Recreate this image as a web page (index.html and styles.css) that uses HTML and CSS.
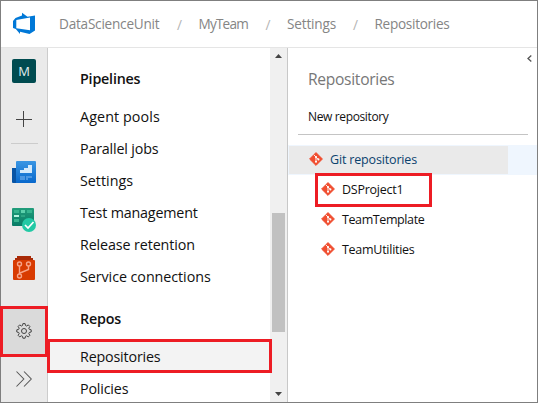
FILE: index.html
```html
<!DOCTYPE html>
<html lang="en">
<head>
<meta charset="utf-8">
<title>Repositories</title>
<link rel="stylesheet" href="styles.css">
</head>
<body>
<svg class="defs" width="0" height="0" aria-hidden="true">
  <symbol id="git" viewBox="0 0 14 14">
    <path d="M7 .6 13.4 7 7 13.4.6 7z" fill="#f04e30" stroke="#f04e30" stroke-width="1" stroke-linejoin="round"/>
    <path d="M4.800 2.800 7 5v5M7 5.200l2.400 2.300" fill="none" stroke="#fff" stroke-width=".9"/>
    <circle cx="7" cy="5" r="1.050" fill="#fff"/><circle cx="7" cy="9.700" r="1.050" fill="#fff"/><circle cx="9.400" cy="7.400" r="1.050" fill="#fff"/>
  </symbol>
</svg>
<div class="window">
  <header class="topbar">
    <svg class="logo" width="24" height="24" viewBox="0 0 24 24"><path fill="#0078d7" d="M1 9 3.500 6 10 3.500V.8l5.500 4L23 3.500v15L17.500 22 8 19.800V22L3.800 17 1 16zM4.300 8v8.300L18 18.300V5.600z"/></svg>
    <nav class="crumbs">
      <span class="crumb c-org">DataScienceUnit</span><span class="slash">/</span>
      <span class="crumb c-team">MyTeam</span><span class="slash">/</span>
      <span class="crumb c-set">Settings</span><span class="slash">/</span>
      <span class="crumb c-repo">Repositories</span>
    </nav>
  </header>
  <div class="body">
    <aside class="rail">
      <div class="avatar">M</div>
      <svg class="plus" width="16" height="16" viewBox="0 0 16 16"><path d="M0 8.500h16M7.500 0v16" stroke="#444" fill="none"/></svg>
      <div class="rail-line"></div>
      <svg class="boards" width="24" height="22" viewBox="0 0 24 22">
        <defs><linearGradient id="b" x2="0" y2="1"><stop stop-color="#3a96e3"/><stop offset="1" stop-color="#0868cc"/></linearGradient></defs>
        <path fill="#0754a5" d="M0 7h5v15H1q-1 0-1-1z"/><path fill="url(#b)" d="M4 1q0-1 1-1h18q1 0 1 1v20q0 1-1 1H4z"/>
        <path fill="#d5eafb" d="M8 12V9h4V7h4V4h4v8z"/><path fill="#4c97e2" d="M8 15h5v4H8zM14 15h6v2h-6zM14 17h2v2h-2z"/>
      </svg>
      <svg class="plans" width="24" height="24" viewBox="0 0 24 24">
        <defs><linearGradient id="p" x2="0" y2="1"><stop stop-color="#229d7b"/><stop offset="1" stop-color="#087c67"/></linearGradient></defs>
        <rect width="22" height="18" rx="1" fill="url(#p)"/>
        <path fill="#36b48f" d="M2 2h5v3H2zM15 2h5v3h-5zM2 11h5v3H2z"/><path fill="#5cd0ac" d="M9 2h4v3H9z"/><path fill="#b5f3df" d="M2 7h5v2H2z"/><path fill="#2ba583" d="M9 7h4v2H9z"/>
        <circle cx="17" cy="17" r="7" fill="#22c9a5"/><path d="m13 17 3 3 5.500-6" fill="none" stroke="#fff" stroke-width="1.700"/>
      </svg>
      <svg class="repos" width="22" height="24" viewBox="0 0 22 24">
        <path fill="#a92b08" d="M4 0h14v2h2v2H2V2h2z"/><rect y="4" width="22" height="20" rx="1" fill="#d83b01"/>
        <g fill="none" stroke="#f7a487" stroke-width="1.400"><circle cx="6.500" cy="8" r="2"/><circle cx="15.500" cy="8" r="2"/><circle cx="6.500" cy="20" r="2"/><path d="M6.500 10v8M15.500 10v3.500L7 17"/></g>
      </svg>
      <div class="gear-cell">
        <svg width="16" height="16" viewBox="0 0 16 16" fill="none" stroke="#444" stroke-width="1"><path d="M6.900.6h2.200l.4 1.900 1.100.5 1.700-1.100 1.600 1.600-1.100 1.700.5 1.100 1.900.5v2.200l-1.900.5-.5 1.100 1.100 1.700-1.600 1.600-1.700-1.100-1.100.5-.4 1.900H6.900l-.4-1.900-1.100-.5-1.700 1.100-1.600-1.600 1.100-1.700-.5-1.100L.8 9V6.800l1.900-.5.5-1.100-1.100-1.700 1.600-1.600L5.400 3l1.100-.5z"/><circle cx="8" cy="8" r="2.500"/></svg>
      </div>
      <svg class="more" width="16" height="16" viewBox="0 0 16 16"><path d="m.5.500 7.300 7.500-7.300 7.500M8 .5 15.300 8 8 15.500" stroke="#555" stroke-width="1.050" fill="none"/></svg>
    </aside>
    <nav class="menu">
      <h2 class="m-pipe">Pipelines</h2>
      <ul>
        <li class="m-agent">Agent pools</li><li class="m-jobs">Parallel jobs</li><li class="m-set">Settings</li>
        <li class="m-test">Test management</li><li class="m-rel">Release retention</li><li class="m-svc">Service connections</li>
      </ul>
      <h2 class="m-repos">Repos</h2>
      <ul><li class="m-repo current">Repositories</li><li class="m-pol">Policies</li></ul>
    </nav>
    <div class="scrollbar">
      <svg width="7" height="4" viewBox="0 0 7 4"><path d="M0 4h7L3.500 0z" fill="#444"/></svg>
      <div class="thumb"></div>
      <svg width="7" height="4" viewBox="0 0 7 4"><path d="M0 0h7L3.500 4z" fill="#444"/></svg>
    </div>
    <main class="panel">
      <svg class="collapse" width="5" height="7" viewBox="0 0 5 7"><path d="M4.300.500 1 3.500l3.300 3" fill="none" stroke="#555" stroke-width="1.300"/></svg>
      <h1>Repositories</h1>
      <div class="new">New repository</div>
      <ul class="tree">
        <li class="root"><div class="rootcell"><svg class="git"><use href="#git"/></svg><span class="t-git">Git repositories</span></div></li>
        <li><svg class="git"><use href="#git"/></svg><span class="t-ds">DSProject1</span></li>
        <li><svg class="git"><use href="#git"/></svg><span class="t-tpl">TeamTemplate</span></li>
        <li><svg class="git"><use href="#git"/></svg><span class="t-util">TeamUtilities</span></li>
      </ul>
    </main>
  </div>
  <div class="mark mark-gear"></div>
  <div class="mark mark-menu"></div>
  <div class="mark mark-project"></div>
</div>
</body>
</html>
```
FILE: styles.css
```css
* { box-sizing: border-box; }
body, h1, h2, ul { margin: 0; padding: 0; }
body { font-family: "Open Sans", "Noto Sans", sans-serif; color: #111; background: #fff; overflow: hidden; }
ul { list-style: none; }
svg { display: block; flex: none; }
.defs { position: absolute; }
.window { position: relative; width: 538px; height: 403px; border: 1px solid #7f7f7f; display: flex; flex-direction: column; white-space: nowrap; }
.topbar { height: 47px; flex: none; border-bottom: 1px solid #e5e5e5; display: flex; align-items: center; padding-left: 11px; }
.crumbs { display: flex; align-items: center; padding-left: 23px; font-size: 13.6px; color: #858585; }
.crumb { line-height: 20px; }
.c-org { width: 103px; letter-spacing: -.23px; }
.c-team { width: 52px; letter-spacing: -.8px; }
.c-set { width: 51px; letter-spacing: -.18px; }
.c-repo { letter-spacing: -.3px; }
.slash { width: 36.500px; padding-left: 15px; color: #b5b5b5; }
.body { flex: 1; min-height: 0; display: flex; }
.rail { width: 47px; flex: none; background: #eaeaea; border-right: 1px solid #ccc; display: flex; flex-direction: column; align-items: center; padding-top: 11px; }
.avatar { width: 24px; height: 24px; border-radius: 2px; background: #004b50; color: #e4eeee; font-size: 13px; line-height: 24px; text-align: center; }
.plus { margin-top: 28px; }
.rail-line { width: 27px; height: 1px; background: #ccc; margin-top: 16px; }
.boards { margin-top: 17px; }
.plans { margin-top: 25px; }
.repos { margin-top: 24px; }
.gear-cell { width: 46px; height: 48px; margin-top: 27px; background: #dadada; display: flex; align-items: center; justify-content: center; }
.more { margin-top: 16px; }
.menu { width: 222px; flex: none; overflow: hidden; font-size: 14.3px; }
.menu h2 { font-size: 14.3px; font-weight: 600; padding-left: 32px; height: 20px; line-height: 20px; margin-top: 21px; letter-spacing: -.2px; }
.menu ul { margin-top: 12px; }
.menu li { height: 32px; line-height: 32px; padding-left: 32px; }
.menu .m-repos { margin-top: 16px; }
.menu .current { background: #f3f3f3; }
.m-agent { letter-spacing: .1px; }
.m-jobs, .m-test, .m-repo, .m-pol { letter-spacing: -.18px; }
.m-rel { letter-spacing: -.12px; }
.m-svc { letter-spacing: -.06px; }
.scrollbar { width: 18px; flex: none; background: #f0f0f0; border-right: 1px solid #c8c8c8; display: flex; flex-direction: column; align-items: center; padding: 6px 0; }
.thumb { width: 13px; height: 119px; background: #c1c1c1; margin: 155px 0 60px; }
.panel { flex: 1; display: flex; flex-direction: column; }
.collapse { align-self: flex-end; margin: 7px 5px 0 0; }
h1 { font-size: 15.600px; font-weight: 400; color: #777; line-height: 24px; padding-left: 20px; margin-top: 5px; letter-spacing: -.3px; }
.new { font-size: 12px; height: 36px; line-height: 36px; margin: 8px 9px 10px 10px; padding-left: 10px; border-bottom: 1px solid #c4c4c4; letter-spacing: -.36px; }
.tree { font-size: 12.500px; }
.tree li { height: 30px; display: flex; align-items: center; padding: 0 0 2px 33px; }
.tree .root { background: #eff6fe; padding: 0 0 0 1px; color: #0b426e; }
.rootcell { width: 219px; height: 28px; background: #eaeaea; display: flex; align-items: center; padding: 0 0 2px 20px; }
.t-git { letter-spacing: -.16px; }
.t-ds { letter-spacing: -.25px; }
.t-tpl { letter-spacing: -.4px; }
.t-util { letter-spacing: -.27px; }
.git { width: 14px; height: 14px; margin-right: 7px; }
.mark { position: absolute; border: 3px solid #ed1c24; }
.mark-gear { left: -1px; top: 305px; width: 48px; height: 51px; }
.mark-menu { left: 46px; top: 338px; width: 225px; height: 34px; }
.mark-project { left: 314px; top: 172px; width: 117px; height: 34px; }
```
